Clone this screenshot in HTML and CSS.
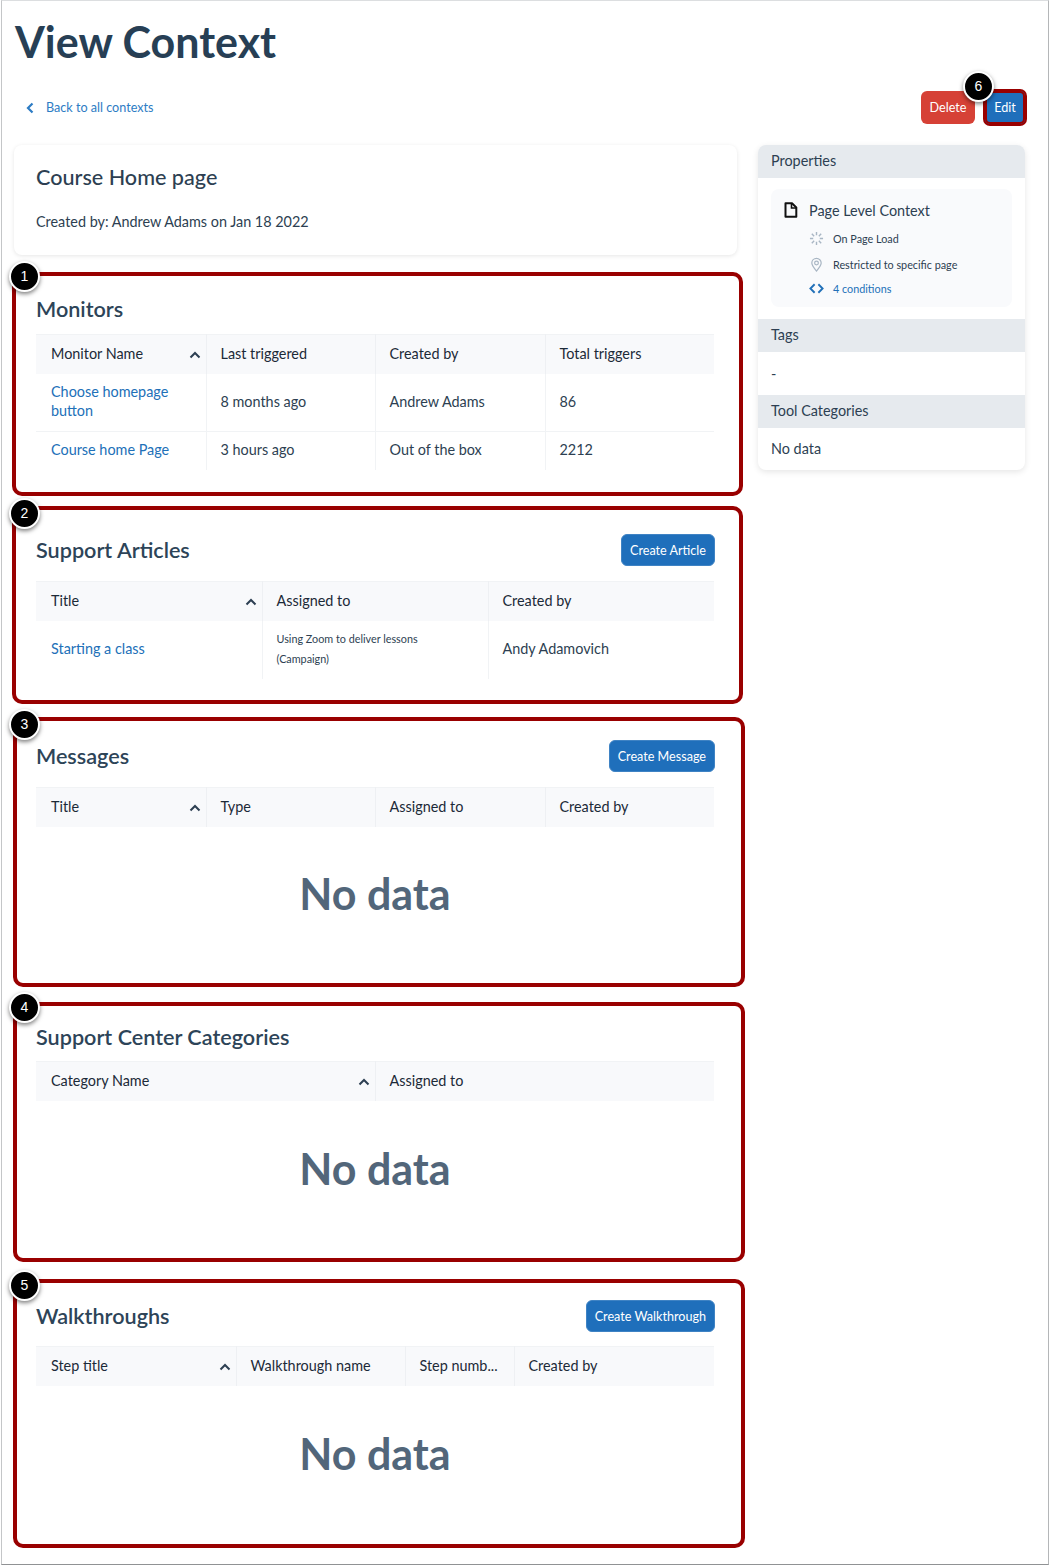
FILE: index.html
```html
<!DOCTYPE html>
<html lang="en">
<head>
    <meta charset="UTF-8">
    <title>View Context</title>
    <link rel="stylesheet" href="styles.css">
</head>
<body>
<div class="page">
    <h1 class="page-title">View Context</h1>

    <div class="toolbar">
        <a class="back-link" href="#">
            <svg class="back-icon" viewBox="0 0 8 12"><path d="M6.5 1.5 2 6l4.5 4.5" fill="none" stroke="currentColor" stroke-width="2.2"/></svg>
            Back to all contexts
        </a>
        <div class="toolbar-actions">
            <span class="badge badge-edit">6</span>
            <button class="btn btn-delete">Delete</button>
            <button class="btn btn-primary btn-edit">Edit</button>
        </div>
    </div>

    <div class="columns">
        <main class="main-col">
            <div class="card">
                <h2 class="card-title">Course Home page</h2>
                <p class="card-meta">Created by: Andrew Adams on Jan 18 2022</p>
            </div>

            <!-- Monitors -->
            <section class="panel panel-monitors">
                <span class="badge">1</span>
                <div class="panel-head"><h2>Monitors</h2></div>
                <table class="data-table">
                    <colgroup><col class="w170"><col class="w169"><col class="w170"><col></colgroup>
                    <thead>
                        <tr>
                            <th class="sorted">Monitor Name <svg class="sort-icon" viewBox="0 0 12 8"><path d="M1.5 6.5 6 2l4.5 4.5" fill="none" stroke="currentColor" stroke-width="2"/></svg></th>
                            <th>Last triggered</th>
                            <th>Created by</th>
                            <th>Total triggers</th>
                        </tr>
                    </thead>
                    <tbody>
                        <tr class="row-tall">
                            <td><a href="#">Choose homepage button</a></td>
                            <td>8 months ago</td>
                            <td>Andrew Adams</td>
                            <td>86</td>
                        </tr>
                        <tr class="row-short">
                            <td><a href="#">Course home Page</a></td>
                            <td>3 hours ago</td>
                            <td>Out of the box</td>
                            <td>2212</td>
                        </tr>
                    </tbody>
                </table>
            </section>

            <!-- Support Articles -->
            <section class="panel panel-articles">
                <span class="badge">2</span>
                <div class="panel-head">
                    <h2>Support Articles</h2>
                    <button class="btn btn-primary">Create Article</button>
                </div>
                <table class="data-table">
                    <colgroup><col class="w226"><col class="w226"><col></colgroup>
                    <thead>
                        <tr>
                            <th class="sorted">Title <svg class="sort-icon" viewBox="0 0 12 8"><path d="M1.5 6.5 6 2l4.5 4.5" fill="none" stroke="currentColor" stroke-width="2"/></svg></th>
                            <th>Assigned to</th>
                            <th>Created by</th>
                        </tr>
                    </thead>
                    <tbody>
                        <tr class="row-article">
                            <td><a href="#">Starting a class</a></td>
                            <td class="small-cell">Using Zoom to deliver lessons (Campaign)</td>
                            <td>Andy Adamovich</td>
                        </tr>
                    </tbody>
                </table>
            </section>

            <!-- Messages -->
            <section class="panel panel-wide panel-messages">
                <span class="badge">3</span>
                <div class="panel-head">
                    <h2>Messages</h2>
                    <button class="btn btn-primary">Create Message</button>
                </div>
                <table class="data-table">
                    <colgroup><col class="w170"><col class="w169"><col class="w170"><col></colgroup>
                    <thead>
                        <tr>
                            <th class="sorted">Title <svg class="sort-icon" viewBox="0 0 12 8"><path d="M1.5 6.5 6 2l4.5 4.5" fill="none" stroke="currentColor" stroke-width="2"/></svg></th>
                            <th>Type</th>
                            <th>Assigned to</th>
                            <th>Created by</th>
                        </tr>
                    </thead>
                </table>
                <p class="no-data">No data</p>
            </section>

            <!-- Support Center Categories -->
            <section class="panel panel-wide panel-categories">
                <span class="badge">4</span>
                <div class="panel-head"><h2>Support Center Categories</h2></div>
                <table class="data-table">
                    <colgroup><col class="w339"><col></colgroup>
                    <thead>
                        <tr>
                            <th class="sorted">Category Name <svg class="sort-icon" viewBox="0 0 12 8"><path d="M1.5 6.5 6 2l4.5 4.5" fill="none" stroke="currentColor" stroke-width="2"/></svg></th>
                            <th>Assigned to</th>
                        </tr>
                    </thead>
                </table>
                <p class="no-data">No data</p>
            </section>

            <!-- Walkthroughs -->
            <section class="panel panel-wide panel-walkthroughs">
                <span class="badge">5</span>
                <div class="panel-head">
                    <h2>Walkthroughs</h2>
                    <button class="btn btn-primary">Create Walkthrough</button>
                </div>
                <table class="data-table">
                    <colgroup><col class="w200"><col class="w169"><col class="w109"><col></colgroup>
                    <thead>
                        <tr>
                            <th class="sorted">Step title <svg class="sort-icon" viewBox="0 0 12 8"><path d="M1.5 6.5 6 2l4.5 4.5" fill="none" stroke="currentColor" stroke-width="2"/></svg></th>
                            <th>Walkthrough name</th>
                            <th>Step numb...</th>
                            <th>Created by</th>
                        </tr>
                    </thead>
                </table>
                <p class="no-data">No data</p>
            </section>
        </main>

        <aside class="side-col">
            <h3 class="side-head side-head-first">Properties</h3>
            <div class="side-props">
                <div class="props-box">
                    <div class="props-title">
                        <svg class="doc-icon" viewBox="0 0 14 16"><path d="M2 1.2h6.5L12.8 5.5V14.8H2z" fill="none" stroke="#111" stroke-width="2" stroke-linejoin="round"/><path d="M8 1.5V6h4.5" fill="none" stroke="#111" stroke-width="1.6"/></svg>
                        Page Level Context
                    </div>
                    <div class="props-line props-line-load">
                        <svg class="props-icon" viewBox="0 0 16 16"><path d="M8 1v3.5M8 11.5V15M1 8h3.5M11.5 8H15M3 3l2.5 2.5M10.5 10.5 13 13M3 13l2.5-2.5M10.5 5.5 13 3" fill="none" stroke="#a9b6c4" stroke-width="1.5"/></svg>
                        On Page Load
                    </div>
                    <div class="props-line props-line-page">
                        <svg class="props-icon" viewBox="0 0 16 16"><path d="M8 15C5 11.5 3 9 3 6.5a5 5 0 0 1 10 0C13 9 11 11.5 8 15z" fill="none" stroke="#a9b6c4" stroke-width="1.3"/><circle cx="8" cy="6.5" r="2" fill="none" stroke="#a9b6c4" stroke-width="1.3"/></svg>
                        Restricted to specific page
                    </div>
                    <div class="props-line props-line-cond">
                        <svg class="props-icon" viewBox="0 0 16 12"><path d="M6 1.5 1.5 6 6 10.5M10 1.5 14.5 6 10 10.5" fill="none" stroke="#2170b8" stroke-width="2"/></svg>
                        <a href="#">4 conditions</a>
                    </div>
                </div>
            </div>
            <h3 class="side-head">Tags</h3>
            <div class="side-value">-</div>
            <h3 class="side-head">Tool Categories</h3>
            <div class="side-value">No data</div>
        </aside>
    </div>
</div>
</body>
</html>
```

FILE: styles.css
```css
/* Base */
body {
    margin: 0;
    background-color: white;
    font-family: Lato, "Open Sans", sans-serif;
    color: #2d3f52;
}

a {
    color: #2170b8;
    text-decoration: none;
}

.page {
    box-sizing: border-box;
    width: 1048px;
    height: 1565px;
    margin-left: 1px;
    border-left: 1px solid #c4c6c8;
    border-right: 1px solid #b4b6b8;
    border-top: 1px solid #dcdee0;
    border-bottom: 1px solid #909294;
}

.page-title {
    margin: 0;
    padding: 14px 0 0 13px;
    height: 60px;
    font-size: 43px;
    line-height: 54px;
    font-weight: 700;
    color: #273f55;
}

/* Barra superior */
.toolbar {
    display: flex;
    justify-content: space-between;
    align-items: center;
    height: 33px;
    margin-top: 16px;
    padding: 0 23px 0 12px;
}

.back-link {
    display: flex;
    align-items: center;
    gap: 12px;
    padding-left: 12px;
    font-size: 12.6px;
    color: #2d7cc4;
}

.back-icon {
    width: 8px;
    height: 12px;
}

.toolbar-actions {
    position: relative;
    display: flex;
    gap: 10px;
}

.btn {
    height: 32px;
    padding: 0 8px;
    border: 1px solid transparent;
    border-radius: 6px;
    color: white;
    font-family: inherit;
    font-size: 12.6px;
}

.btn-primary {
    background-color: #1f6fbb;
    border-color: #3f83c4;
}

.btn-delete {
    width: 54px;
    height: 33px;
    padding: 0;
    background-color: #d64136;
}

.btn-edit {
    width: 40px;
    height: 33px;
    padding: 0;
    border: none;
    border-radius: 5px;
    box-shadow: 0 0 0 2px #990000, inset 0 0 0 2px #990000;
}

/* Columnas */
.columns {
    display: flex;
    align-items: flex-start;
    margin-top: 21px;
}

.main-col {
    width: 745px;
}

.side-col {
    width: 267px;
    margin-left: 11px;
    border-radius: 8px;
    overflow: hidden;
    box-shadow: 0 2px 6px rgba(0, 0, 0, 0.1);
}

/* Tarjeta superior */
.card {
    box-sizing: border-box;
    width: 723px;
    height: 110px;
    margin-left: 12px;
    padding: 18px 22px 0;
    border-radius: 8px;
    box-shadow: 0 1px 4px rgba(0, 0, 0, 0.1);
}

.card-title {
    margin: 0;
    font-size: 21.6px;
    line-height: 28px;
    font-weight: 500;
    color: #2d3f52;
}

.card-meta {
    margin: 21px 0 0;
    font-size: 14.4px;
    line-height: 20px;
}

/* Secciones con marco rojo */
.panel {
    position: relative;
    box-sizing: border-box;
    width: 731px;
    margin-left: 10px;
    padding: 0 25px 0 20px;
    border: 4px solid #990000;
    border-radius: 10px;
}

.panel-wide {
    width: 732px;
    margin-left: 11px;
    padding: 0 27px 0 19px;
}

.panel h2 {
    margin: 0;
    font-size: 21.6px;
    font-weight: 600;
    line-height: 32px;
    color: #2d4458;
}

.panel-head {
    display: flex;
    justify-content: space-between;
    align-items: center;
}

.panel-head .btn {
    margin-right: -1px;
}

.panel-monitors {
    height: 224px;
    margin-top: 17px;
    padding-top: 17px;
}

.panel-monitors .data-table {
    margin-top: 9px;
}

.panel-articles {
    height: 198px;
    margin-top: 10px;
    padding-top: 24px;
}

.panel-articles .data-table {
    margin-top: 15px;
}

.panel-messages {
    height: 270px;
    margin-top: 13px;
    padding-top: 19px;
}

.panel-messages .data-table {
    margin-top: 15px;
}

.panel-messages .no-data {
    margin-top: 42px;
}

.panel-categories {
    height: 260px;
    margin-top: 15px;
    padding-top: 15px;
}

.panel-categories .data-table {
    margin-top: 8px;
}

.panel-walkthroughs {
    height: 269px;
    margin-top: 17px;
    padding-top: 17px;
}

.panel-walkthroughs .data-table {
    margin-top: 14px;
}

/* Numeros de los marcos */
.badge {
    position: absolute;
    top: -15px;
    left: -7px;
    box-sizing: border-box;
    width: 31px;
    height: 31px;
    border: 2px solid white;
    border-radius: 50%;
    background-color: black;
    box-shadow: 0 2px 4px rgba(0, 0, 0, 0.5);
    color: white;
    font-family: "Liberation Sans", sans-serif;
    font-size: 14px;
    line-height: 27px;
    text-align: center;
}

.panel-articles .badge,
.panel-messages .badge {
    top: -12px;
}

.panel-wide .badge {
    left: -8px;
}

.panel-categories .badge {
    top: -14px;
}

.panel-walkthroughs .badge {
    top: -13px;
}

.badge-edit {
    z-index: 1;
    top: -20px;
    left: 42px;
}

/* Tablas */
.data-table {
    width: 678px;
    table-layout: fixed;
    border-collapse: collapse;
    font-size: 14.4px;
}

.w109 { width: 109px; }
.w169 { width: 169px; }
.w170 { width: 170px; }
.w200 { width: 200px; }
.w226 { width: 226px; }
.w339 { width: 339px; }

.data-table th {
    position: relative;
    box-sizing: border-box;
    height: 39px;
    padding: 0 14px 2px;
    background-color: #f8f9fb;
    border-right: 1px solid #eef0f3;
    border-top: 1px solid #f1f3f5;
    font-weight: 400;
    text-align: left;
    white-space: nowrap;
    color: #1c2a38;
}

.data-table th:last-child,
.data-table td:last-child {
    border-right: none;
}

.data-table td {
    box-sizing: border-box;
    padding: 0 14px 2px;
    border-right: 1px solid #f1f3f5;
    border-bottom: 1px solid #f1f3f5;
    line-height: 19.5px;
}

.data-table th:first-child,
.data-table td:first-child {
    padding-left: 15px;
}

.data-table tr:last-child td {
    border-bottom: none;
}

.sort-icon {
    position: absolute;
    right: 5px;
    top: 16px;
    width: 12px;
    height: 8px;
    color: #2d3f52;
}

.row-tall td {
    height: 58px;
}

.row-short td {
    height: 38px;
}

.row-article td {
    height: 58px;
}

.data-table .small-cell {
    padding-right: 50px;
    font-size: 10.8px;
    line-height: 20px;
}

.no-data {
    margin: 43px 0 0;
    font-size: 43px;
    line-height: 50px;
    font-weight: 700;
    text-align: center;
    color: #52667a;
}

/* Columna lateral */
.side-head {
    margin: 0;
    height: 33px;
    padding-left: 13px;
    background-color: #e6eaee;
    font-size: 14.4px;
    font-weight: 400;
    line-height: 32px;
}

.side-props {
    height: 141px;
    padding: 11px 13px 0;
    box-sizing: border-box;
}

.props-box {
    box-sizing: border-box;
    height: 118px;
    padding: 11px 0 0 12px;
    background-color: #f9fafc;
    border-radius: 8px;
}

.props-title {
    display: flex;
    align-items: center;
    gap: 11px;
    height: 20px;
    font-size: 14.4px;
}

.doc-icon {
    width: 15px;
    height: 16px;
}

.props-line {
    display: flex;
    align-items: center;
    gap: 9px;
    padding-left: 26px;
    font-size: 10.8px;
    height: 16px;
}

.props-line-load {
    margin-top: 10px;
}

.props-line-page {
    margin-top: 10px;
}

.props-line-cond {
    margin-top: 8px;
}

.props-icon {
    width: 15px;
    height: 15px;
}

.side-value {
    box-sizing: border-box;
    height: 43px;
    padding-left: 13px;
    font-size: 14.4px;
    line-height: 43px;
}

.side-value:last-child {
    height: 42px;
    line-height: 41px;
}
```
